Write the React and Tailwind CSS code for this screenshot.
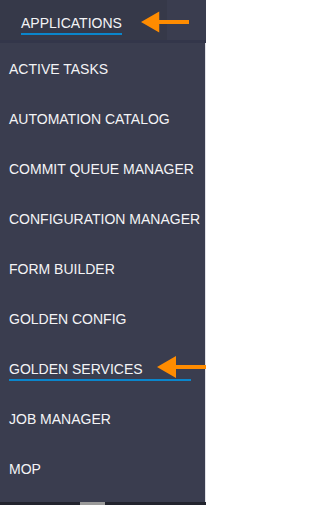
const items = [
  "ACTIVE TASKS",
  "AUTOMATION CATALOG",
  "COMMIT QUEUE MANAGER",
  "CONFIGURATION MANAGER",
  "FORM BUILDER",
  "GOLDEN CONFIG",
  "GOLDEN SERVICES",
  "JOB MANAGER",
  "MOP",
];

const Arrow = ({ className }) => (
  <svg className={className} viewBox="0 0 50 22" fill="#ff8c00">
    <polygon points="0,11 19,0 19,9 50,9 50,13 19,13 19,22" />
  </svg>
);

const App = () => {
  return (
    <div
      className="relative w-[206px] h-[505px] flex flex-col bg-[#3a3d4f] text-[#f4f4f6] overflow-hidden"
      style={{ fontFamily: '"Liberation Sans", Arial, sans-serif' }}
    >
      <div className="flex h-[43px] border-b-[3px] border-[#33364a]">
        <div className="flex-1 bg-[#363949] pl-[21px] pt-[11px]">
          <span className="inline-block text-[14px] leading-[16px] pb-[2px] border-b-2 border-[#0a86cc]">
            APPLICATIONS
          </span>
        </div>
        <div className="w-[39px] bg-[#3a3d4f]" />
      </div>

      <div className="flex-1 flex flex-col border-r border-[#dfe0e6] pt-[1px]">
        {items.map((item) => (
          <div key={item} className="h-[50px] flex items-center pl-[9px] shrink-0">
            {item === "GOLDEN SERVICES" ? (
              <span className="inline-block w-[182px] text-[14px] leading-[16px] pt-[3px] pb-[2px] border-b-2 border-[#0a86cc]">
                {item}
              </span>
            ) : (
              <span className="text-[14px] leading-[16px] whitespace-nowrap">{item}</span>
            )}
          </div>
        ))}
      </div>

      <div className="h-[3px] bg-[#22242e] flex">
        <div className="ml-[80px] w-[25px] bg-[#9a9a9a]" />
      </div>

      <Arrow className="absolute left-[141px] top-[11px] w-[48px] h-[22px]" />
      <Arrow className="absolute left-[157px] top-[356px] w-[50px] h-[22px]" />
    </div>
  );
};

export default App;
